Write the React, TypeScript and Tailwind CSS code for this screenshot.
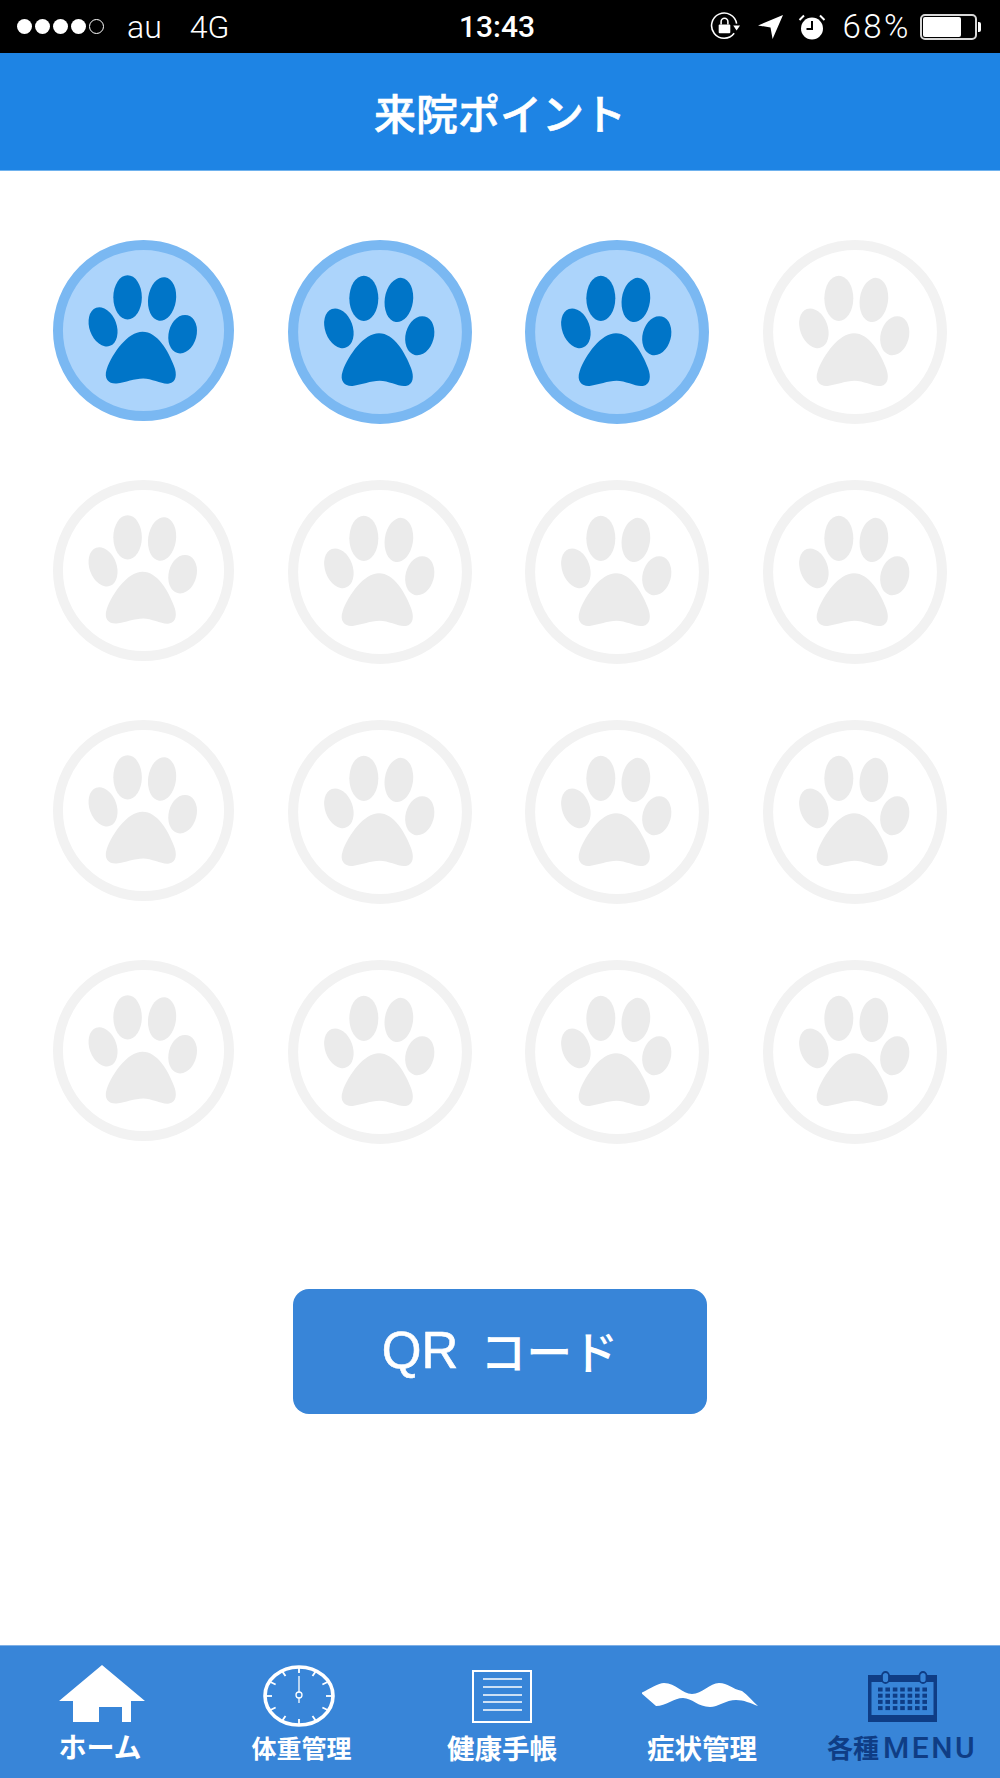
import React from "react";

const JP = { fontFamily: '"Noto Sans CJK JP", "Liberation Sans", sans-serif' };

function Paw({ active, small }: { active: boolean; small: boolean }) {
  const ring = active ? "#7ab8f2" : "#f2f2f2";
  const fill = active ? "#acd4fb" : "#ffffff";
  const paw = active ? "#0075c8" : "#ebebeb";
  return (
    <svg viewBox="70 60 546 546" className={small ? "block w-[181px] h-[181px]" : "block w-[184px] h-[184px]"}>
      <circle cx="343" cy="333" r="258" fill={fill} stroke={ring} strokeWidth="30" />
      <g fill={paw}>
        <ellipse cx="295" cy="233" rx="43" ry="67" />
        <ellipse cx="399" cy="238" rx="42" ry="66" transform="rotate(8 399 238)" />
        <ellipse cx="221" cy="322" rx="41" ry="61" transform="rotate(-20 221 322)" />
        <ellipse cx="461" cy="344" rx="42" ry="59" transform="rotate(15 461 344)" />
        <path d="M340 337 C296 337 250 400 232 450 C222 480 240 495 262 493 C290 490 315 478 342 478 C370 478 400 497 420 493 C442 490 445 465 435 440 C418 395 385 337 340 337 Z" />
      </g>
    </svg>
  );
}

function Home() {
  return (
    <svg viewBox="0 0 120 62" className="w-[120px] h-[62px]">
      <path fill="#fff" d="M62 0 L19 36 L33 36 L33 57 L59 57 L59 42 L82 42 L82 57 L91 57 L91 36 L105 36 Z" />
    </svg>
  );
}

function Clock() {
  const ticks = [30, 60, 120, 150, 210, 240, 300, 330, 0, 90, 270, 180];
  return (
    <svg viewBox="0 0 120 62" className="w-[120px] h-[62px]">
      <ellipse cx="60" cy="31" rx="34" ry="29" fill="none" stroke="#fff" strokeWidth="3.6" />
      {ticks.map((a) => {
        const r = (a * Math.PI) / 180;
        return (
          <line
            key={a}
            x1={60 + Math.sin(r) * 33}
            y1={31 - Math.cos(r) * 28}
            x2={60 + Math.sin(r) * 27}
            y2={31 - Math.cos(r) * 23}
            stroke="#fff"
            strokeWidth="1.8"
          />
        );
      })}
      <line x1="60" y1="11" x2="60" y2="27" stroke="#fff" strokeWidth="1.3" />
      <circle cx="60" cy="30" r="3" fill="none" stroke="#fff" strokeWidth="1.3" />
      <line x1="60" y1="33" x2="60" y2="38" stroke="#fff" strokeWidth="1.3" />
    </svg>
  );
}

function Doc() {
  return (
    <svg viewBox="0 0 120 62" className="w-[120px] h-[62px]">
      <rect x="31" y="6" width="58" height="51" fill="none" stroke="#fff" strokeWidth="2" />
      {[14, 22, 30, 37, 45].map((y) => (
        <line key={y} x1="41" x2="80" y1={y} y2={y} stroke="#fff" strokeWidth="1.4" />
      ))}
    </svg>
  );
}

function Wave() {
  return (
    <svg viewBox="0 0 120 62" className="w-[120px] h-[62px]">
      <path
        fill="#fff"
        d="M-1 28 C8 24 16 18 22 18 C34 18 40 29 50 29 C60 29 68 18 77 18 C86 18 90 24 100 26 C106 30 111 37 116 41 C108 38 102 35 94 35 C84 35 76 42 68 42 C56 42 50 33 41 33 C32 33 24 41 14 41 Z"
      />
    </svg>
  );
}

function Calendar() {
  const navy = "#0f3d85";
  const cols = [0, 1, 2, 3, 4, 5, 6];
  const rows = [0, 1, 2, 3];
  return (
    <svg viewBox="0 0 120 62" className="w-[120px] h-[62px]">
      <rect x="26" y="10" width="69" height="47" fill={navy} />
      <rect x="29.5" y="17" width="62" height="33" fill="#3885d8" />
      <rect x="40" y="7" width="7" height="11" rx="3.5" fill="#3885d8" stroke={navy} strokeWidth="1.8" />
      <rect x="77.5" y="7" width="7" height="11" rx="3.5" fill="#3885d8" stroke={navy} strokeWidth="1.8" />
      {rows.map((r) =>
        cols.map((c) => (
          <rect key={`${r}-${c}`} x={36 + c * 7.4} y={22.5 + r * 6.2} width="4.6" height="4" fill={navy} />
        ))
      )}
    </svg>
  );
}

function Tab({ icon, children }: { icon: React.ReactNode; children: React.ReactNode }) {
  return (
    <div className="flex flex-col items-center">
      {icon}
      {children}
    </div>
  );
}

function Arrow() {
  return (
    <svg viewBox="0 0 24 24" className="w-[25px] h-[25px]">
      <path fill="#fff" d="M0 11 L24 1 L14 24 L12 13 Z" />
    </svg>
  );
}

function RotationLock() {
  return (
    <svg viewBox="0 0 32 32" className="w-[31px] h-[31px]">
      <path d="M26 23 A13 13 0 1 1 28.5 13" fill="none" stroke="#fff" strokeWidth="1.6" />
      <path d="M25 15 L32 15 L28.5 20 Z" fill="#fff" />
      <rect x="10" y="14" width="12" height="9" rx="1" fill="#fff" />
      <path d="M12.5 14 V11 a3.5 3.5 0 0 1 7 0 V14" fill="none" stroke="#fff" strokeWidth="1.6" />
    </svg>
  );
}

function Alarm() {
  return (
    <svg viewBox="0 0 28 28" className="w-[28px] h-[28px]">
      <circle cx="14" cy="15.5" r="11" fill="#fff" />
      <path d="M14 8 V16 H8.5" fill="none" stroke="#000" strokeWidth="2" />
      <path d="M1.5 7 L6 2.5" stroke="#fff" strokeWidth="2" />
      <path d="M26.5 7 L22 2.5" stroke="#fff" strokeWidth="2" />
    </svg>
  );
}

function Battery() {
  return (
    <div className="flex items-center">
      <div className="w-[57px] h-[26px] border-2 border-[#d8d8d8] rounded-[5px] p-[1px]">
        <div className="h-full w-[38px] bg-white rounded-[2px]" />
      </div>
      <div className="w-[3px] h-[10px] ml-[1px] bg-white rounded-r-[2px]" />
    </div>
  );
}

export default function App() {
  const stat = { fontFamily: 'Roboto, "Liberation Sans", sans-serif' };
  return (
    <div className="w-[1000px] h-[1778px] bg-white flex flex-col overflow-hidden" style={JP}>
      <div className="h-[53px] bg-black text-white flex items-center pl-[17px] pr-[19px] text-[32px] leading-none" style={stat}>
        <div className="flex items-center w-[360px]">
          <div className="flex gap-[3px]">
            <span className="w-[15px] h-[15px] rounded-full bg-white" />
            <span className="w-[15px] h-[15px] rounded-full bg-white" />
            <span className="w-[15px] h-[15px] rounded-full bg-white" />
            <span className="w-[15px] h-[15px] rounded-full bg-white" />
            <span className="w-[15px] h-[15px] rounded-full border border-white" />
          </div>
          <span className="ml-[23px] font-light">au</span>
          <span className="ml-[28px] font-light">4G</span>
        </div>
        <div className="ml-[82px] text-[30px] font-medium">13:43</div>
        <div className="ml-auto flex items-center">
          <RotationLock />
          <div className="ml-[18px]"><Arrow /></div>
          <div className="ml-[15px]"><Alarm /></div>
          <span className="ml-[16px] text-[33px] font-light tracking-[2.5px]">68%</span>
          <div className="ml-[9px]"><Battery /></div>
        </div>
      </div>

      <div className="h-[118px] bg-[#1e84e4] border-b border-[#6fb2ee] flex items-center justify-center text-white text-[42px] font-medium leading-none [-webkit-text-stroke:0.6px_white]">
        来院ポイント
      </div>

      <main className="flex-1 pt-[69px] flex flex-col">
        <div className="pl-[53px] grid grid-cols-[181px_184px_184px_184px] gap-x-[53.5px] gap-y-[56px]">
          {Array.from({ length: 16 }).map((_, i) => (
            <Paw key={i} active={i < 3} small={i % 4 === 0} />
          ))}
        </div>
        <button
          className="mt-[145px] mx-auto w-[414px] h-[125px] pb-[6px] rounded-[16px] bg-[#3885d8] text-white text-[46px] leading-none flex items-center justify-center"
          style={JP}
        >
          <span className="text-[51px] pt-[4px] [-webkit-text-stroke:0.6px_white]" style={{ fontFamily: '"Liberation Sans", sans-serif' }}>QR</span>
          <span className="ml-[22px] font-medium">コード</span>
        </button>
      </main>

      <nav className="h-[133px] bg-[#3885d8] border-t border-[#7fb0e6] pt-[19px] grid grid-cols-[200px_198px_208px_192px_202px] text-white font-bold leading-none">
        <Tab icon={<Home />}>
          <span className="mt-[5px] text-[28px] leading-[28px]">ホーム</span>
        </Tab>
        <div className="flex flex-col items-center">
          <Clock />
          <span className="mt-[6px] ml-[5px] text-[25px] leading-[28px]">体重管理</span>
        </div>
        <Tab icon={<Doc />}>
          <span className="mt-[6px] text-[27.5px] leading-[28px]">健康手帳</span>
        </Tab>
        <Tab icon={<Wave />}>
          <span className="mt-[6px] text-[27.5px] leading-[28px]">症状管理</span>
        </Tab>
        <div className="flex flex-col items-center pl-[6px]">
          <Calendar />
          <span className="mt-[6px] text-[26px] leading-[28px] text-[#0f3d85] font-bold whitespace-nowrap">
            各種<span className="ml-[4px] text-[30px] font-medium tracking-[2.5px]" style={{ fontFamily: 'Roboto, "Liberation Sans", sans-serif' }}>MENU</span>
          </span>
        </div>
      </nav>
    </div>
  );
}
